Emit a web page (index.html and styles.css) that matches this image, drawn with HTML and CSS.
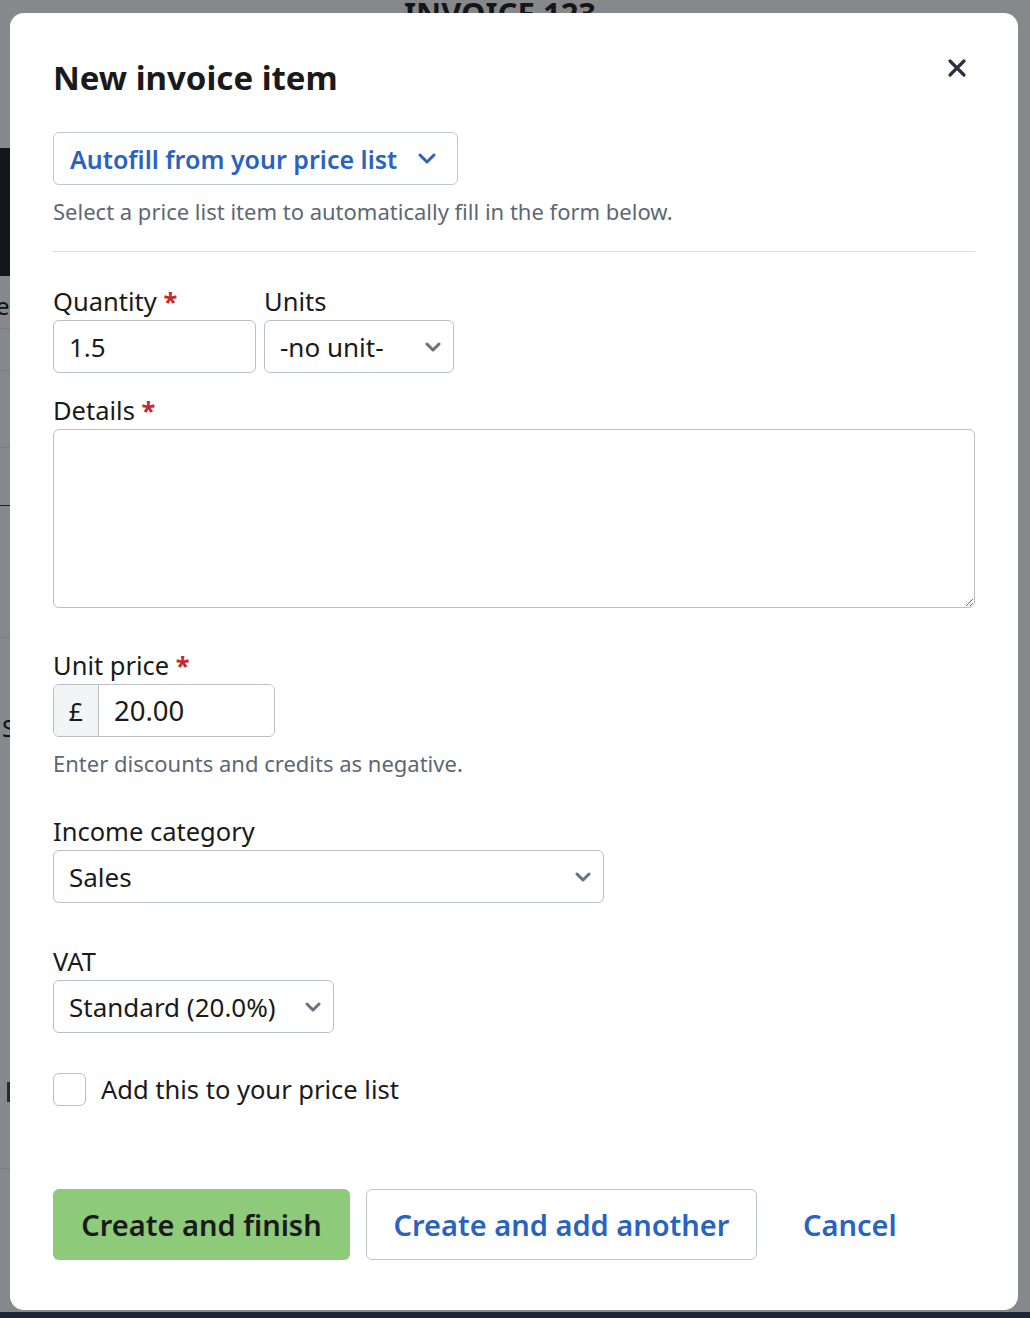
FILE: index.html
```html
<!DOCTYPE html>
<html lang="en">
<head>
  <meta charset="UTF-8">
  <meta name="viewport" content="width=device-width, initial-scale=1.0">
  <title>New invoice item</title>
  <link rel="stylesheet" href="styles.css">
</head>
<body>

<!-- invoice page sitting behind the dialog -->
<div class="page">
  <h1 class="page-title">INVOICE 123</h1>
  <div class="page-side">
    <div class="side-gap"></div>
    <div class="side-dark"></div>
    <div class="side-row row-a">e</div>
    <div class="side-row row-b"></div>
    <div class="side-row row-c"></div>
    <div class="side-row row-d"></div>
    <div class="side-row row-e"></div>
    <div class="side-row row-f">S</div>
    <div class="side-mark"></div>
  </div>
  <div class="page-footer"></div>
</div>

<div class="overlay"></div>

<div class="modal">
  <div class="modal-head">
    <h2>New invoice item</h2>
    <button class="close" type="button" aria-label="Close">
      <svg width="20" height="20" viewBox="0 0 20 20"><path d="M3 3 L17 17 M17 3 L3 17" stroke="#28333d" stroke-width="3.2" stroke-linecap="round"/></svg>
    </button>
  </div>

  <button class="autofill" type="button">
    Autofill from your price list
    <svg width="18" height="12" viewBox="0 0 18 12"><path d="M2 2 L9 9 L16 2" fill="none" stroke="#2a63bf" stroke-width="3" stroke-linecap="round" stroke-linejoin="round"/></svg>
  </button>
  <p class="hint">Select a price list item to automatically fill in the form below.</p>

  <hr>

  <form class="item-form">
    <div class="row">
      <div class="field qty">
        <label for="qty">Quantity <span class="req">*</span></label>
        <input id="qty" type="text" value="1.5">
      </div>
      <div class="field units">
        <label for="units">Units</label>
        <div class="select-wrap">
          <select id="units"><option>-no unit-</option></select>
          <svg class="chev" width="16" height="10" viewBox="0 0 16 10"><path d="M2 2 L8 8 L14 2" fill="none" stroke="#67727c" stroke-width="3" stroke-linecap="round" stroke-linejoin="round"/></svg>
        </div>
      </div>
    </div>

    <div class="field details">
      <label for="details">Details <span class="req">*</span></label>
      <textarea id="details"></textarea>
    </div>

    <div class="field price">
      <label for="price">Unit price <span class="req">*</span></label>
      <div class="money">
        <span class="currency">£</span>
        <input id="price" type="text" value="20.00">
      </div>
      <p class="hint">Enter discounts and credits as negative.</p>
    </div>

    <div class="field income">
      <label for="income">Income category</label>
      <div class="select-wrap">
        <select id="income"><option>Sales</option></select>
        <svg class="chev" width="16" height="10" viewBox="0 0 16 10"><path d="M2 2 L8 8 L14 2" fill="none" stroke="#67727c" stroke-width="3" stroke-linecap="round" stroke-linejoin="round"/></svg>
      </div>
    </div>

    <div class="field vat">
      <label for="vat">VAT</label>
      <div class="select-wrap">
        <select id="vat"><option>Standard (20.0%)</option></select>
        <svg class="chev" width="16" height="10" viewBox="0 0 16 10"><path d="M2 2 L8 8 L14 2" fill="none" stroke="#67727c" stroke-width="3" stroke-linecap="round" stroke-linejoin="round"/></svg>
      </div>
    </div>

    <label class="check">
      <input type="checkbox">
      <span class="box"></span>
      Add this to your price list
    </label>

    <div class="actions">
      <button type="button" class="btn primary">Create and finish</button>
      <button type="button" class="btn secondary">Create and add another</button>
      <button type="button" class="btn link">Cancel</button>
    </div>
  </form>
</div>

</body>
</html>
```

FILE: styles.css
```css
* {
  margin: 0;
  padding: 0;
  box-sizing: border-box;
}
body {
  font-family: "Noto Sans", Arial, sans-serif;
  background: #fff;
  color: #1a1a1a;
  overflow: hidden;
  height: 1318px;
}

/* page behind */
.page {
  height: 1318px;
  display: flex;
  flex-direction: column;
}
.page-title {
  font-size: 31px;
  line-height: 32px;
  font-weight: 700;
  margin-top: -3px;
  text-align: center;
  padding-right: 30px;
}
.page-side {
  width: 60px;
  flex: 1;
  display: flex;
  flex-direction: column;
}
.side-gap {
  height: 119px;
}
.side-dark {
  height: 128px;
  background: #1a1a1a;
}
.side-row {
  border-bottom: 1px solid #e6e6e6;
  font-size: 24px;
  line-height: 52px;
  padding-left: 2px;
  color: #111;
}
.row-a { height: 53px; padding-top: 4px; margin-left: -4px; padding-left: 0; }
.row-b { height: 42px; }
.row-c { height: 77px; }
.row-d { height: 58px; border-bottom-color: #333; }
.row-e { height: 132px; }
.row-f { height: 531px; line-height: 180px; }
.side-mark {
  width: 3px;
  height: 20px;
  margin-left: 7px;
  margin-top: -87px;
  background: #444;
}
.page-footer {
  height: 6px;
  background: #273b59;
}

.overlay {
  position: fixed;
  inset: 0;
  background: rgba(15, 17, 23, 0.5);
}

/* dialog */
.modal {
  position: absolute;
  top: 13px;
  left: 10px;
  width: 1008px;
  height: 1297px;
  background: #fff;
  border-radius: 14px;
  padding: 45px 43px 0 43px;
}
.modal-head {
  display: flex;
  justify-content: space-between;
  align-items: flex-start;
}
.modal-head h2 {
  font-size: 33px;
  line-height: 40px;
  font-weight: 700;
  color: #1a1a1a;
}
.close {
  background: none;
  border: none;
  width: 20px;
  height: 20px;
  margin-right: 8px;
  cursor: pointer;
  display: flex;
}
.autofill {
  margin-top: 34px;
  height: 53px;
  display: inline-flex;
  align-items: center;
  gap: 21px;
  padding: 0 21px 0 16px;
  background: #fff;
  border: 1px solid #c3c8cd;
  border-radius: 6px;
  font-family: inherit;
  font-size: 25px;
  font-weight: 600;
  color: #2a63bf;
  cursor: pointer;
}
.hint {
  margin-top: 12px;
  font-size: 22px;
  line-height: 28px;
  color: #5d6873;
}
hr {
  margin-top: 26px;
  border: none;
  border-top: 1px solid #dde0e3;
}

.item-form {
  display: flex;
  flex-direction: column;
}
.row {
  display: flex;
  gap: 8px;
  margin-top: 34px;
}
.field label {
  display: block;
  font-size: 25.5px;
  line-height: 30px;
  margin-bottom: 4px;
  color: #1a1a1a;
}
.req {
  color: #c8262c;
  font-weight: 700;
}
.field input,
.field select,
.field textarea {
  display: block;
  width: 100%;
  height: 53px;
  border: 1px solid #b9bfc5;
  border-radius: 6px;
  padding: 0 15px;
  font-family: inherit;
  font-size: 26px;
  color: #1a1a1a;
  background: #fff;
}
.qty { width: 203px; }
.units { width: 190px; }

.select-wrap {
  position: relative;
}
.field select {
  appearance: none;
  -webkit-appearance: none;
  padding-right: 40px;
}
.chev {
  position: absolute;
  right: 13px;
  top: 22px;
  pointer-events: none;
}

.details { margin-top: 22px; }
.details textarea {
  height: 179px;
  resize: vertical;
  padding: 10px 15px;
}

.price { margin-top: 42px; }
.money {
  display: flex;
  width: 222px;
  height: 53px;
  border: 1px solid #b9bfc5;
  border-radius: 6px;
  overflow: hidden;
}
.currency {
  width: 45px;
  flex: none;
  background: #f3f4f6;
  border-right: 1px solid #b9bfc5;
  font-size: 25px;
  display: flex;
  align-items: center;
  justify-content: center;
}
.money input {
  border: none;
  border-radius: 0;
  height: 51px;
  font-size: 27.5px;
}

.income { margin-top: 39px; width: 551px; }
.vat { margin-top: 43px; width: 281px; }

.check {
  margin-top: 40px;
  display: flex;
  align-items: center;
  gap: 15px;
  font-size: 25.5px;
  line-height: 33px;
  cursor: pointer;
}
.check input {
  display: none;
}
.check .box {
  width: 33px;
  height: 33px;
  border: 1px solid #b9bfc5;
  border-radius: 6px;
}

.actions {
  margin-top: 83px;
  display: flex;
  gap: 16px;
}
.btn {
  height: 71px;
  padding: 0;
  border-radius: 6px;
  font-family: inherit;
  font-size: 29px;
  font-weight: 600;
  white-space: nowrap;
  cursor: pointer;
}
.btn.primary {
  width: 297px;
  background: #8dca7a;
  border: none;
  color: #1a1a1a;
}
.btn.secondary {
  width: 391px;
  background: #fff;
  border: 1px solid #c0c5ca;
  color: #2a63bf;
}
.btn.link {
  background: none;
  border: none;
  color: #2a63bf;
  padding: 0 30px;
}
```
